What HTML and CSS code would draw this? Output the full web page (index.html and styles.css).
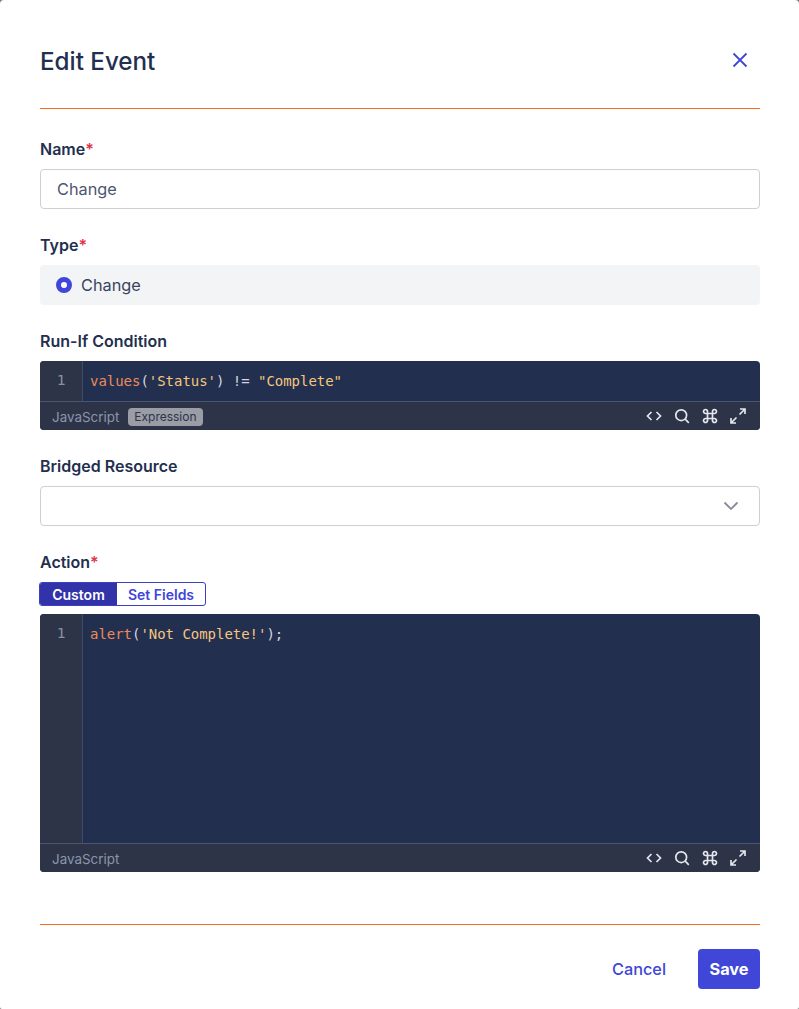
FILE: index.html
```html
<!DOCTYPE html>
<html lang="en">
<head>
<meta charset="utf-8">
<title>Edit Event</title>
<link rel="stylesheet" href="styles.css">
</head>
<body>
<div class="modal">
  <header class="modal-head">
    <h1 class="title">Edit Event</h1>
    <button class="close" aria-label="Close">
      <svg width="16" height="16" viewBox="0 0 16 16"><path d="M1.500 1.500l13 13M14.500 1.500l-13 13" fill="none" stroke="#4046d8" stroke-width="1.800"/></svg>
    </button>
  </header>
  <main class="modal-body">
    <div class="field">
      <div class="label">Name<span class="req">*</span></div>
      <div class="input">Change</div>
    </div>
    <div class="field">
      <div class="label">Type<span class="req">*</span></div>
      <div class="radio-box"><span class="radio"></span><span>Change</span></div>
    </div>
    <div class="field">
      <div class="label">Run-If Condition</div>
      <div class="editor">
        <div class="editor-main editor-short">
          <div class="gutter">1</div>
          <div class="code"><span class="fn">values</span><span class="pn">(</span><span class="str">'Status'</span><span class="pn">) != </span><span class="str">"Complete"</span></div>
        </div>
        <div class="editor-foot">
          <span class="lang">JavaScript</span><span class="tag">Expression</span>
          <div class="tools">
            <svg class="tool" viewBox="0 0 18 18"><path d="M6.500 5L2.500 9l4 4M11.500 5l4 4-4 4"/></svg>
            <svg class="tool" viewBox="0 0 18 18"><circle cx="8.200" cy="8.200" r="5.400"/><path d="M12.200 12.200l3.600 3.600"/></svg>
            <svg class="tool" viewBox="0 0 18 18"><path d="M6.500 6.500h5v5h-5zM6.500 6.500H4.600a2 2 0 1 1 1.900-1.900zM11.500 6.500V4.600a2 2 0 1 1 1.900 1.900zM6.500 11.500v1.900a2 2 0 1 1-1.900-1.900zM11.500 11.500h1.900a2 2 0 1 1-1.900 1.900z"/></svg>
            <svg class="tool" viewBox="0 0 18 18"><path d="M10.500 7.500L16 2M11 2h5v5M7.500 10.500L2 16M2 11v5h5"/></svg>
          </div>
        </div>
      </div>
    </div>
    <div class="field">
      <div class="label">Bridged Resource</div>
      <div class="input select">
        <svg width="16" height="10" viewBox="0 0 16 10"><path d="M1.500 1.500L8 8l6.500-6.500" fill="none" stroke="#8a8c9e" stroke-width="1.800"/></svg>
      </div>
    </div>
    <div class="field">
      <div class="label">Action<span class="req">*</span></div>
      <div class="toggle"><span class="tog tog-on">Custom</span><span class="tog tog-off">Set Fields</span></div>
      <div class="editor">
        <div class="editor-main editor-tall">
          <div class="gutter">1</div>
          <div class="code"><span class="fn">alert</span><span class="pn">(</span><span class="str">'Not Complete!'</span><span class="pn">);</span></div>
        </div>
        <div class="editor-foot">
          <span class="lang">JavaScript</span>
          <div class="tools">
            <svg class="tool" viewBox="0 0 18 18"><path d="M6.500 5L2.500 9l4 4M11.500 5l4 4-4 4"/></svg>
            <svg class="tool" viewBox="0 0 18 18"><circle cx="8.200" cy="8.200" r="5.400"/><path d="M12.200 12.200l3.600 3.600"/></svg>
            <svg class="tool" viewBox="0 0 18 18"><path d="M6.500 6.500h5v5h-5zM6.500 6.500H4.600a2 2 0 1 1 1.900-1.900zM11.500 6.500V4.600a2 2 0 1 1 1.900 1.900zM6.500 11.500v1.900a2 2 0 1 1-1.900-1.900zM11.500 11.500h1.900a2 2 0 1 1-1.900 1.900z"/></svg>
            <svg class="tool" viewBox="0 0 18 18"><path d="M10.500 7.500L16 2M11 2h5v5M7.500 10.500L2 16M2 11v5h5"/></svg>
          </div>
        </div>
      </div>
    </div>
  </main>
  <footer class="modal-foot">
    <button class="btn-link">Cancel</button>
    <button class="btn-save">Save</button>
  </footer>
</div>
</body>
</html>
```
FILE: styles.css
```css
* { box-sizing: border-box; }
html, body { margin: 0; height: 100%; background: #777; }
body { font-family: Inter, "Open Sans", sans-serif; color: #232f4f; overflow: hidden; }
.modal { width: 799px; height: 1009px; padding: 0 39px 20px 40px; display: flex; flex-direction: column; background: #fff; border-radius: 4px 4px 2px 2px; }
.modal-head { height: 109px; border-bottom: 1px solid #f26b21; display: flex; align-items: center; justify-content: space-between; padding-top: 15px; }
.title { margin: 0; font-size: 24.200px; font-weight: 500; line-height: 32px; }
.close { border: 0; background: none; padding: 0; margin-right: 12px; margin-bottom: 4px; display: flex; }
.modal-body { padding-top: 30px; display: flex; flex-direction: column; gap: 26px; flex: 1; }
.label { font-size: 16px; font-weight: 600; line-height: 20px; margin-bottom: 10px; }
.req { color: #e0334c; }
.input { height: 40px; border: 1px solid #cfcfd3; border-radius: 4px; padding: 0 16px; font-size: 16.300px; line-height: 39px; color: #4d5670; }
.select { display: flex; align-items: center; justify-content: flex-end; padding-right: 20px; }
.radio-box { height: 40px; background: #f3f4f6; border-radius: 4px; display: flex; align-items: center; gap: 9px; padding-left: 16px; font-size: 16.300px; color: #3a4460; }
.radio { width: 16px; height: 16px; border-radius: 50%; border: 5px solid #4046d8; background: #fff; }
.editor { border-radius: 4px; overflow: hidden; background: #232f4f; }
.editor-main { display: flex; }
.editor-short { height: 40px; }
.editor-tall { height: 229px; }
.gutter { width: 43px; flex: none; background: #2d3448; border-right: 1px solid #3d4a68; color: #8b90a0; font: 14.500px/39px "DejaVu Sans Mono", monospace; text-align: center; }
.code { padding-left: 7px; font: 14px/40px "DejaVu Sans Mono", monospace; white-space: pre; letter-spacing: -0.03px; }
.fn { color: #ec8a5c; }
.pn { color: #d4d6de; }
.str { color: #f5c67f; }
.editor-foot { height: 29px; background: #2d3448; border-top: 1px solid #4a5570; display: flex; align-items: center; padding: 0 13px 0 12px; }
.lang { font-size: 13.400px; color: #8b96ac; padding-top: 1px; }
.tag { margin-left: 9px; font-size: 12px; line-height: 18px; padding: 0 6px; background: #9a9ca6; color: #2d3448; border-radius: 4px; margin-top: 2px; }
.tools { margin-left: auto; display: flex; gap: 10px; }
.tool { width: 18px; height: 18px; fill: none; stroke: #e4e6ec; stroke-width: 1.700; }
.toggle { display: flex; width: 167px; height: 24px; margin-left: -1px; border: 1px solid #3a3fc4; border-radius: 3px; overflow: hidden; font-size: 14px; font-weight: 600; line-height: 23px; margin-bottom: 8px; color: #4046d8; }
.tog { text-align: center; }
.tog-on { width: 77px; background: #3233a8; color: #fff; }
.tog-off { flex: 1; }
.modal-foot { border-top: 1px solid #f26b21; padding-top: 24px; display: flex; justify-content: flex-end; align-items: center; gap: 32px; }
.btn-link { border: 0; background: none; padding: 0; font: 500 16.300px Inter, sans-serif; color: #4046d8; }
.btn-save { width: 62px; height: 40px; border: 0; border-radius: 4px; background: #4046d8; color: #fff; font: 700 16.300px Inter, sans-serif; }
```
